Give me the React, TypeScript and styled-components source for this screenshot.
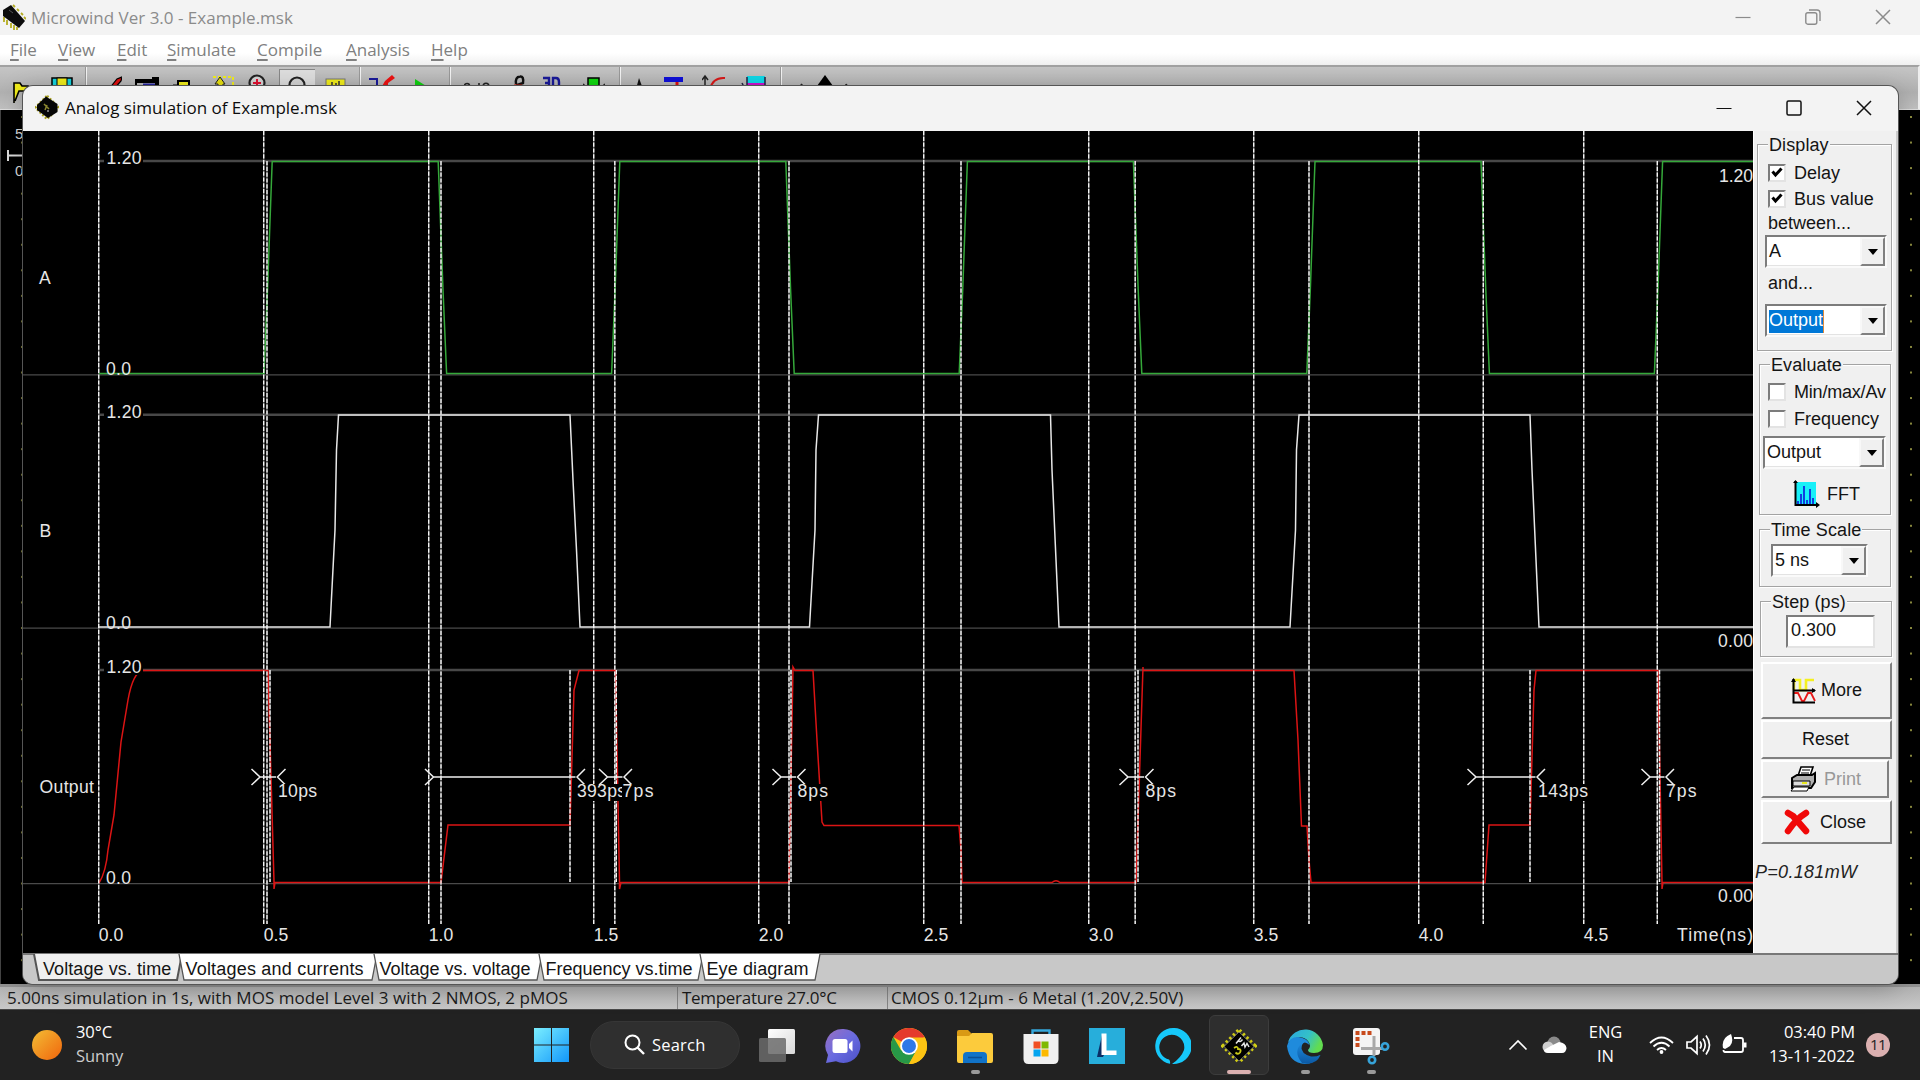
import React from "react";
import styled, { createGlobalStyle, css } from "styled-components";

const ARIAL = '"Liberation Sans", Arial, sans-serif';
const SEGOE = '"Open Sans", "Noto Sans", sans-serif';

const GlobalStyle = createGlobalStyle`
  * { box-sizing: border-box; }
  body { margin: 0; background: #000; overflow: hidden; }
`;

const Desktop = styled.div`
  position: relative;
  width: 1920px;
  height: 1080px;
  display: flex;
  flex-direction: column;
  background: #000;
  overflow: hidden;
`;

/* ---------- main window ---------- */

const MainTitle = styled.header`
  display: flex;
  align-items: center;
  height: 35px;
  padding-bottom: 1px;
  background: #f3f3f3;
  color: #8b8b8b;
  font: 17px ${SEGOE};
`;

const Title = styled.span<{ $gap: number; $spacing: number }>`
  margin-left: ${(p) => p.$gap}px;
  letter-spacing: ${(p) => p.$spacing}px;
  white-space: nowrap;
  flex: 1;
`;

const Controls = styled.div<{ $right: number }>`
  display: flex;
  align-items: center;
  gap: 54px;
  margin-right: ${(p) => p.$right}px;
`;

const MenuBar = styled.nav`
  display: flex;
  height: 30px;
  background: linear-gradient(#fff 60%, #f0f0f0);
  padding-left: 10px;
  color: #808080;
  font: 17px/30px ${SEGOE};
`;

const MenuItem = styled.span<{ $w: number; $spacing: number }>`
  width: ${(p) => p.$w}px;
  letter-spacing: ${(p) => p.$spacing}px;
  white-space: nowrap;
  &::first-letter { text-decoration: underline; text-underline-offset: 3px; text-decoration-thickness: 1.5px; }
`;

const Toolbar = styled.div`
  display: flex;
  height: 45px;
  border-top: 2px solid #a2a2a2;
  border-right: 2px solid #eee;
  border-bottom: 1px solid #ddd;
  background: linear-gradient(#c5c5c5, #b0b0b0 60%, #c0c0c0);
  overflow: hidden;
`;

const ToolSlot = styled.span<{ $ml: number; $w: number; $pressed?: boolean }>`
  flex: none;
  display: block;
  margin-left: ${(p) => p.$ml}px;
  margin-top: 2px;
  width: ${(p) => p.$w}px;
  height: 40px;
  ${(p) => p.$pressed && css`
    background: #dedede;
    border-left: 1px solid #888;
    border-top: 1px solid #888;
  `}
  svg { display: block; }
`;

const ToolSep = styled.i<{ $ml: number }>`
  flex: none;
  width: 2px;
  height: 42px;
  margin-left: ${(p) => p.$ml}px;
  border-left: 1px solid #999;
  border-right: 1px solid #f4f4f4;
`;

const Canvas = styled.main`
  height: 874px;
  display: flex;
  justify-content: space-between;
  border-left: 1px solid #444;
`;

const StatusBar = styled.footer`
  display: flex;
  height: 25px;
  border-top: 3px solid #919191;
  background: linear-gradient(#b2b2b2, #c8c8c8);
  color: #1b1b1b;
  font: 17px/21px ${SEGOE};
`;

const StatusPane = styled.div<{ $w?: number; $spacing: number; $pl: number }>`
  width: ${(p) => (p.$w ? p.$w + "px" : "auto")};
  padding-left: ${(p) => p.$pl}px;
  letter-spacing: ${(p) => p.$spacing}px;
  white-space: nowrap;
  & + & { border-left: 1px solid #858585; }
`;

/* ---------- simulation dialog ---------- */

const Dialog = styled.section`
  position: absolute;
  left: 23px;
  top: 86px;
  width: 1875px;
  height: 898px;
  display: flex;
  flex-direction: column;
  border-radius: 10px;
  overflow: hidden;
  background: #c8c8c8;
  box-shadow: 0 0 0 1px #555, 0 4px 24px rgba(0, 0, 0, 0.25);
`;

const DialogTitle = styled.header`
  flex: none;
  display: flex;
  align-items: center;
  height: 45px;
  padding: 0 0 2px 12px;
  background: #f3f3f3;
  color: #0c0c0c;
  font: 17px ${SEGOE};
`;

const DialogBody = styled.div`
  display: flex;
  height: 822px;
`;

const Plot = styled.svg`
  display: block;
  flex: none;
  width: 1730px;
  height: 822px;
  background: #000;
  text { font: 17.6px ${ARIAL}; fill: #e6e6e6; }
`;

const Panel = styled.aside`
  flex: 1;
  display: flex;
  flex-direction: column;
  align-items: flex-start;
  background: #f0f0f0;
  border-right: 2px solid #ccc;
  border-left: 1px solid #fff;
  color: #141414;
  font: 18px/20px ${ARIAL};
  overflow: hidden;
`;

const Group = styled.div<{ $ml: number; $mt: number; $w: number; $h: number }>`
  flex: none;
  display: flex;
  flex-direction: column;
  align-items: flex-start;
  margin: ${(p) => p.$mt}px 0 0 ${(p) => p.$ml}px;
  width: ${(p) => p.$w}px;
  height: ${(p) => p.$h}px;
  border: 1px solid #a3a3a3;
  box-shadow: 1px 1px 0 #fff, inset 1px 1px 0 #fff;
`;

const Legend = styled.span`
  height: 20px;
  margin: -10px 0 0 10px;
  padding: 0 1px;
  line-height: 21px;
  letter-spacing: 0.1px;
  background: #f0f0f0;
`;

const Row = styled.div<{ $mt: number; $ml: number; $h?: number; $spacing?: number }>`
  flex: none;
  display: flex;
  align-items: center;
  margin: ${(p) => p.$mt}px 0 0 ${(p) => p.$ml}px;
  height: ${(p) => p.$h ?? 18}px;
  letter-spacing: ${(p) => p.$spacing ?? 0}px;
  white-space: nowrap;
  background: #f0f0f0;
`;

const CheckBox = styled.span`
  display: flex;
  width: 18px;
  height: 18px;
  margin-right: 8px;
  background: #fff;
  border: 2px solid;
  border-color: #7c7c7c #e3e3e3 #e3e3e3 #7c7c7c;
`;

const Combo = styled.div<{ $mt: number; $ml: number; $w: number }>`
  flex: none;
  display: flex;
  margin: ${(p) => p.$mt}px 0 0 ${(p) => p.$ml}px;
  width: ${(p) => p.$w}px;
  height: 33px;
  background: #fff;
  border: 2px solid;
  border-color: #7c7c7c #fafafa #fafafa #7c7c7c;
  box-shadow: inset -1px -1px 0 #e3e3e3;
`;

const ComboText = styled.span`
  flex: 1;
  padding: 4px 0 0 2px;
`;

const Selected = styled.mark`
  display: inline-block;
  height: 23px;
  line-height: 21px;
  margin-top: -2px;
  background: #0078d7;
  color: #fff;
  border-right: 1px solid #e08a3c;
`;

const DropButton = styled.span`
  display: flex;
  align-items: center;
  justify-content: center;
  width: 25px;
  height: 29px;
  background: #f0f0f0;
  border: 2px solid;
  border-color: #f8f8f8 #808080 #808080 #f8f8f8;
  &::after {
    content: "";
    border: 5.5px solid transparent;
    border-top: 6px solid #000;
    border-bottom: 0;
  }
`;

const Input = styled.div`
  width: 89px;
  height: 33px;
  margin: 3px 0 0 25px;
  padding: 3px 0 0 3px;
  background: #fff;
  border: 2px solid;
  border-color: #7c7c7c #e3e3e3 #e3e3e3 #7c7c7c;
`;

const Button = styled.button<{ $mt: number; $h: number; $w?: number; $gap?: number; $pl: number; $off?: boolean }>`
  flex: none;
  display: flex;
  align-items: center;
  gap: ${(p) => p.$gap ?? 6}px;
  margin: ${(p) => p.$mt}px 0 0 7px;
  padding: 0 0 0 ${(p) => p.$pl}px;
  width: ${(p) => p.$w ?? 131}px;
  height: ${(p) => p.$h}px;
  color: ${(p) => (p.$off ? "#989898" : "#141414")};
  font: 18px ${ARIAL};
  background: #f0f0f0;
  border: 2px solid;
  border-color: #fff #808080 #808080 #fff;
`;

const Power = styled.div`
  margin: 18px 0 0 1px;
  font-style: italic;
  letter-spacing: 0.3px;
  color: #222;
`;

const TabStrip = styled.div`
  display: flex;
  height: 31px;
  padding-left: 13px;
  background: #c8c8c8;
  border-top: 2px solid #777;
  font: 18px ${ARIAL};
  color: #141414;
`;

const TabBox = styled.div<{ $w: number; $spacing: number; $pl: number }>`
  position: relative;
  width: ${(p) => p.$w}px;
  height: 27px;
  padding-left: ${(p) => p.$pl}px;
  line-height: 28px;
  white-space: nowrap;
  letter-spacing: ${(p) => p.$spacing}px;
  svg { position: absolute; left: -3px; top: -1px; overflow: visible; }
  span { position: relative; }
`;

/* ---------- taskbar ---------- */

const Taskbar = styled.div`
  position: relative;
  flex: none;
  display: flex;
  align-items: center;
  height: 71px;
  padding-bottom: 1px;
  border-top: 1px solid #484848;
  background: #222;
  color: #fff;
  font: 16.5px/24px ${SEGOE};
`;

const Weather = styled.div`
  display: flex;
  align-items: center;
  width: 518px;
  padding-left: 32px;
  letter-spacing: -0.1px;
  div + div { margin-left: 14px; padding-bottom: 1px; }
  small { display: block; font-size: inherit; color: #ccc; }
`;

const Sun = styled.div`
  width: 30px;
  height: 30px;
  border-radius: 50%;
  background: linear-gradient(135deg, #f3bd35, #f0650c);
`;

const Start = styled.div`
  width: 72px;
  padding-left: 16px;
  svg { display: block; }
`;

const Search = styled.div`
  display: flex;
  align-items: center;
  width: 150px;
  height: 48px;
  padding-left: 33px;
  gap: 7px;
  border-radius: 24px;
  background: #2f2f2f;
  border: 1px solid #363636;
  letter-spacing: 0.2px;
`;

const Apps = styled.div`
  display: flex;
  margin-left: 4px;
`;

const AppSlot = styled.div<{ $active?: boolean }>`
  display: flex;
  flex-direction: column;
  align-items: center;
  width: 60px;
  height: 60px;
  margin: 0 3px;
  padding-top: 12px;
  border-radius: 6px;
  border: 1px solid ${(p) => (p.$active ? "#3c3c3c" : "transparent")};
  background: ${(p) => (p.$active ? "#2e2e2e" : "transparent")};
  svg { display: block; flex: none; }
`;

const Running = styled.i<{ $active?: boolean }>`
  width: ${(p) => (p.$active ? 24 : 9)}px;
  height: 5px;
  margin-top: 6px;
  border-radius: 3px;
  background: ${(p) => (p.$active ? "#dbb0b0" : "#9a9a9a")};
`;

const Tray = styled.div`
  display: flex;
  align-items: center;
  flex: 1;
  padding-left: 104px;
  svg { flex: none; }
`;

const Lang = styled.div`
  width: 85px;
  margin-left: -4px;
  padding-bottom: 1px;
  text-align: center;
  letter-spacing: -0.1px;
`;

const Clock = styled.div`
  width: 108px;
  padding-bottom: 1px;
  text-align: right;
  white-space: nowrap;
  letter-spacing: 0px;
`;

const Badge = styled.div`
  width: 24px;
  height: 24px;
  margin-left: 11px;
  border-radius: 50%;
  background: #dbb0b0;
  color: #222;
  text-align: center;
  font-size: 15px;
  line-height: 23px;
  letter-spacing: -0.5px;
`;

/* ---------- small drawings ---------- */

const WindowButtons = ({ color, restored }: { color: string; restored?: boolean }) => (
  <>
    <svg width="16" height="16" stroke={color} strokeWidth="1.2"><path d="M0.5 8.500H15.5" /></svg>
    {restored ? (
      <svg width="16" height="16" fill="none" stroke={color} strokeWidth="1.4">
        <rect x="0.8" y="3.8" width="11" height="11.4" rx="2" />
        <path d="M4 1H12Q15 1 15 4V12" />
      </svg>
    ) : (
      <svg width="16" height="16" fill="none" stroke={color} strokeWidth="1.5"><rect x="1" y="1" width="14" height="14" rx="1.5" /></svg>
    )}
    <svg width="16" height="16" stroke={color} strokeWidth="1.5"><path d="M1 1L15 15M15 1L1 15" /></svg>
  </>
);

const MainChip = () => (
  <svg width="25" height="26" style={{ marginLeft: 1 }}>
    <path d="M3 13v5M6 16v5M10 19v5M13 21v5M16 23v3M12 1l2 2M16 5l2 2M20 9l2 2M23 13l2 2" stroke="#b4ac20" strokeWidth="1.8" />
    <path d="M2 6L10 1L24 17L18 24L2 12Z" fill="#0c0c0c" />
    <path d="M8 6l4 3" stroke="#555" />
  </svg>
);

const TitleChip = () => (
  <svg width="24" height="25" viewBox="0 0 24 25">
    <path d="M12 1L23.500 12.500L12 24L0.500 12.500Z" fill="none" stroke="#a8a020" strokeWidth="2.600" strokeDasharray="2 1.700" />
    <path d="M11 1.500L22.500 9V17L13 23L2 15V10Z" fill="#060606" />
    <path d="M9 9L14 14M12 10L10 15" stroke="#8c8830" strokeWidth="1.500" />
    <path d="M12 16H14" stroke="#ddd" />
  </svg>
);

const AppChip = () => (
  <svg width="36" height="36" viewBox="0 0 36 36">
    <path d="M18 2.500L33.500 18L18 33.500L2.500 18Z" fill="none" stroke="#d0cc14" strokeWidth="4.500" strokeDasharray="2.400 2.600" />
    <path d="M18 4L33 18.500L18 33L3 18.500Z" fill="#000" stroke="#8a8a8a" strokeWidth="0.7" />
    <path d="M15 15.500L20 9.500M17.300 12.500Q19 15 21.500 11.500M20.500 18L23 15L24 19L26 15.500L28 19" fill="none" stroke="#e4e4e4" strokeWidth="1.500" />
    <path d="M13 20Q17 17.500 17 21Q21 21 19 24.500Q17 27 14.500 24.500" fill="none" stroke="#c8c818" strokeWidth="1.800" />
  </svg>
);

type Tool = { ml: number; w: number; art?: React.ReactNode; sep?: boolean; pressed?: boolean };
const magnifier = (sign: React.ReactNode) => (
  <>
    <circle cx="9" cy="14" r="7.5" fill="#d4d4d4" stroke="#222" strokeWidth="2.2" />
    <g stroke="#e01030" strokeWidth="2">{sign}</g>
  </>
);
const tools: Tool[] = [
  { ml: 13, w: 17, art: <path d="M1 34V14H7L9 17H15V22H6L2 32" fill="#f2ee1c" stroke="#000" strokeWidth="1.6" /> },
  { ml: 21, w: 22, art: <><rect x="1" y="9" width="20" height="16" fill="#16d5e0" stroke="#000" strokeWidth="1.5" /><rect x="6" y="9" width="10" height="12" fill="#f2ee1c" stroke="#000" /></> },
  { ml: 12, w: 2, sep: true },
  { ml: 22, w: 13, art: <path d="M0 20L8 10L13 8L12 12L5 20" fill="#e01010" stroke="#000" strokeWidth="1.2" /> },
  { ml: 13, w: 26, art: <><path d="M0 10H17V8H24V17H20V14H2V17H0Z" fill="#000" /><path d="M8 16H20" stroke="#2222a0" strokeWidth="3" /></> },
  { ml: 12, w: 20, art: <><path d="M5 12H16V20H5Z" fill="#f2ee1c" stroke="#000" strokeWidth="2" /><path d="M0 18H6" stroke="#f2ee1c" strokeWidth="4" /><path d="M0 16H6" stroke="#000" /></> },
  { ml: 18, w: 24, art: <><path d="M2 8H22V20" fill="none" stroke="#f2ee1c" strokeDasharray="3 2" strokeWidth="2" /><path d="M7 20V15H4L9 8L14 15H12V20Z" fill="#e8e010" stroke="#222" /></> },
  { ml: 13, w: 19, art: magnifier(<path d="M9 10V18M5 14H13" />) },
  { ml: 12, w: 36, pressed: true, art: <g transform="translate(8 1)">{magnifier(<path d="M5 16H13" />)}</g> },
  { ml: 10, w: 22, art: <><rect x="1" y="10" width="19" height="14" fill="#f2ee1c" stroke="#777" /><path d="M7 13v7M11 14v6M14 12v7" stroke="#333" strokeWidth="1.5" /></> },
  { ml: 12, w: 2, sep: true },
  { ml: 8, w: 27, art: <><path d="M0 10H8V20" fill="none" stroke="#1a1a99" strokeWidth="2" /><path d="M12 19L16 12L23 6L26 9L19 14V19Z" fill="#ee1212" /></> },
  { ml: 18, w: 17, art: <path d="M1 10L17 20H1Z" fill="#10d010" /> },
  { ml: 18, w: 2, sep: true },
  { ml: 13, w: 28, art: <g fill="none" stroke="#222" strokeWidth="1.6"><circle cx="3" cy="17" r="2.5" /><path d="M15 14V20" /><circle cx="22" cy="17" r="2.8" /></g> },
  { ml: 10, w: 24, art: <><path d="M14 15Q13 8 18 7.500Q22 7 21 14L14 16.500" fill="none" stroke="#111" strokeWidth="2.400" /><path d="M3 17.500H22" stroke="#d0b010" strokeWidth="2.500" /><path d="M12 16.500H20" stroke="#e02010" strokeWidth="2" /></> },
  { ml: 17, w: 19, art: <path d="M0 9H6V20M2 14H6M10 20V9H13Q16 9 16 13V20" fill="none" stroke="#1a1a99" strokeWidth="2.4" /> },
  { ml: 21, w: 22, art: <><path d="M5 9H16V20H5Z" fill="#10d810" stroke="#000" strokeWidth="1.5" /><path d="M0 15L4 20M22 15L18 20" stroke="#222" strokeWidth="2" /></> },
  { ml: 14, w: 2, sep: true },
  { ml: 14, w: 9, art: <path d="M4 9L8 20H1Z" fill="#111" /> },
  { ml: 20, w: 20, art: <><rect x="0" y="8" width="19" height="5" fill="#1010d8" /><path d="M13 13V20" stroke="#e01010" strokeWidth="3" /></> },
  { ml: 18, w: 24, art: <><path d="M3 20V8M0 11L3 7L6 11" fill="none" stroke="#222" strokeWidth="1.5" /><path d="M8 20Q11 8 23 9" fill="none" stroke="#d81818" strokeWidth="2" /></> },
  { ml: 15, w: 26, art: <><rect x="6" y="7" width="18" height="7" fill="#10d8e8" /><rect x="6" y="14" width="18" height="7" fill="#d010d0" /><path d="M6 8V20M24 8V20M1 14L4 20" stroke="#224" strokeWidth="1.5" /></> },
  { ml: 13, w: 2, sep: true },
  { ml: 15, w: 52, art: <><path d="M28 6L36 17H20Z" fill="#000" /><path d="M5 15L2 20M49 15L51 20" stroke="#222" strokeWidth="2" /></> },
];

/* ---------- plot data, in window coordinates ---------- */

const gridX = Array.from({ length: 10 }, (_, i) => 98.7 + 165 * i);
const edgeX = [267, 441, 614.8, 789, 961, 1135.2, 1309, 1483.3, 1657.3];
const shortX = [270, 570, 616.3, 791, 1138, 1530, 1659.5];

const clockPath = (() => {
  let d = "M99 373.5";
  for (let i = 0; i < 5; i++) {
    const r = 264 + 347.6 * i;
    d += `H${r}L${r + 3.5} 290L${r + 7.5} 180L${r + 8.2} 161.5`;
    if (i < 4) d += `H${r + 174.2}L${r + 176} 210L${r + 179} 290L${r + 182.6} 373.5`;
  }
  return d + "H1753";
})();

const bPath =
  "M99 627H330L335 530L336.500 450L338.5 415H570L573 480L576.500 550L580 627H809.5L815 530L816 450L818.500 415H1050.5L1052 470L1059 627H1290L1295.500 530L1296.500 450L1299 415H1530L1532 470L1539 627H1753";

const outPath =
  "M99 883Q106 872 108 850L114 815L121 742L128 700Q133 672 143 670.5H268L274 882V889L275 882.5H441L448 825H570L574 690L579 670.5H615.5L619.5 882V889L621 882.5H789L793 667L795 670.5H813L817 740L822 822L824 825.5H959L961 850L962 882.5H1052Q1056 879 1060 882.5H1136L1143 667V670.5H1294L1298 740L1301.5 826H1307L1309 860L1311 882.5H1485L1489 825H1530L1534 690L1536 670.5H1658L1662 882V889L1663 882.5H1753";

const markers: { l: number; r: number; tx: number; tw: number; label: string }[] = [
  { l: 260, r: 277.5, tx: 278, tw: 39, label: "10ps" },
  { l: 433.5, r: 577, tx: 577, tw: 49, label: "393ps" },
  { l: 607.5, r: 624, tx: 622.5, tw: 31, label: "7ps" },
  { l: 781, r: 797.5, tx: 797.5, tw: 30.5, label: "8ps" },
  { l: 1128, r: 1145.5, tx: 1145.5, tw: 30.5, label: "8ps" },
  { l: 1476, r: 1537, tx: 1538, tw: 50, label: "143ps" },
  { l: 1650, r: 1666, tx: 1666, tw: 30.5, label: "7ps" },
];

const WavePlot = () => (
  <Plot viewBox="23 131 1730 822">
    <path d="M99 161H1753M99 414.8H1753M99 670H1753" stroke="#484848" strokeWidth="2.4" />
    <path d="M23 374.8H1753M23 628.2H1753M23 883.7H1753" stroke="#4a4a4a" strokeWidth="1.3" />
    <g strokeWidth="1.4" stroke="#606060">
      {gridX.map((x) => <path key={x} d={`M${x} 131V924`} />)}
      {edgeX.map((x) => <path key={x} d={`M${x} 161V924`} />)}
      {shortX.map((x) => <path key={x} d={`M${x} 670V882`} />)}
    </g>
    <g fill="none" strokeWidth="1.5">
      <path d={clockPath} stroke="#35a83a" />
      <path d={bPath} stroke="#e8e8e8" />
      <path d={outPath} stroke="#dc1414" />
    </g>
    <g stroke="#f4f4f4" strokeWidth="1.4" strokeDasharray="4.2 1.6">
      {gridX.map((x) => <path key={x} d={`M${x} 131V924`} />)}
      {edgeX.map((x) => <path key={x} d={`M${x} 161V924`} />)}
      {shortX.map((x) => <path key={x} d={`M${x} 670V882`} />)}
    </g>
    {[161, 415, 670].map((y) => (
      <g key={y}>
        <rect x="104" y={y - 12} width="39" height="17" fill="#000" />
        <text x="106.5" y={y + 2.5} textLength="35">1.20</text>
      </g>
    ))}
    {[374, 628, 883].map((y) => <text key={y} x="106" y={y + 1} textLength="25">0.0</text>)}
    <text x="39" y="284">A</text>
    <text x="39.5" y="537">B</text>
    <text x="39.5" y="793" textLength="54.5">Output</text>
    {markers.map((m, i) => (
      <g key={i}>
        <path
          d={`M${m.l - 8.5} 769L${m.l} 777L${m.l - 8.5} 785M${m.l} 777H${m.r - 1.5}M${m.r + 8} 769L${m.r} 777L${m.r + 8} 785`}
          fill="none" stroke="#f0f0f0" strokeWidth="1.5"
        />
        <rect x={m.tx - 0.5} y="784" width={m.tw} height="17" fill="#000" />
        <text x={m.tx} y="797" textLength={m.tw}>{m.label}</text>
      </g>
    ))}
    {gridX.map((x, i) => <text key={x} x={x} y="941" textLength="24.5">{(i * 0.5).toFixed(1)}</text>)}
    <text x="1677" y="941" textLength="76">Time(ns)</text>
    <text x="1719" y="181.5" textLength="34">1.20</text>
    <text x="1718" y="647" textLength="35">0.00</text>
    <text x="1718" y="902" textLength="35">0.00</text>
  </Plot>
);

const tabs: [string, number, number, number][] = [
  ["Voltage vs. time", 145, 0.08, 7],
  ["Voltages and currents", 195, 0.2, 4.5],
  ["Voltage vs. voltage", 165, 0, 3.5],
  ["Frequency vs.time", 161, 0, 4.5],
  ["Eye diagram", 117, 0.1, 4.5],
];

const Tab = ({ label, w, spacing, pl, active }: { label: string; w: number; spacing: number; pl: number; active: boolean }) => (
  <TabBox $w={w} $spacing={spacing} $pl={pl}>
    <svg width={w + 6} height="27">
      <path d={`M1 0L6 26H${w - 1}L${w + 4} 0Z`} fill={active ? "#f0f0f0" : "#fff"} />
      <path d={`M1 0L6 26H${w - 1}L${w + 4} 0`} fill="none" stroke="#555" strokeWidth={active ? 2 : 1.3} />
    </svg>
    <span>{label}</span>
  </TabBox>
);

const Check = ({ on, label }: { on?: boolean; label: string }) => (
  <>
    <CheckBox>
      {on && <svg width="14" height="14"><path d="M2.5 5.5L5.5 9L11.5 2.5" fill="none" stroke="#000" strokeWidth="3" /></svg>}
    </CheckBox>
    {label}
  </>
);

const SidePanel = () => (
  <Panel>
    <Group $ml={3} $mt={13} $w={135} $h={207}>
      <Legend>Display</Legend>
      <Row $mt={9} $ml={10}><Check on label="Delay" /></Row>
      <Row $mt={8} $ml={10} $spacing={0.1}><Check on label="Bus value" /></Row>
      <Row $mt={5} $ml={10} $h={20}>between...</Row>
      <Combo $mt={2} $ml={7} $w={122}><ComboText>A</ComboText><DropButton /></Combo>
      <Row $mt={5} $ml={10} $h={20}>and...</Row>
      <Combo $mt={11} $ml={7} $w={122}><ComboText><Selected>Output</Selected></ComboText><DropButton /></Combo>
    </Group>
    <Group $ml={5} $mt={13} $w={132} $h={151}>
      <Legend>Evaluate</Legend>
      <Row $mt={8} $ml={8} $spacing={-0.2}><Check label="Min/max/Av" /></Row>
      <Row $mt={9} $ml={8}><Check label="Frequency" /></Row>
      <Combo $mt={8} $ml={3} $w={123}><ComboText>Output</ComboText><DropButton /></Combo>
      <Row $mt={11} $ml={33} $h={28}>
        <svg width="27" height="28" style={{ marginRight: 7 }}>
          <rect x="3" y="2" width="20" height="23" fill="#18f0f8" />
          <path d="M5 25v-4M8 25v-11M11 25v-19M14 25v-5M17 25v-16M20 25v-7" stroke="#1040e0" strokeWidth="2" />
          <path d="M2.5 1V25H25" fill="none" stroke="#000" strokeWidth="2" />
          <path d="M0 3L2.5 0L5 3ZM23 22L27 25L23 28Z" />
        </svg>
        FFT
      </Row>
    </Group>
    <Group $ml={5} $mt={14} $w={132} $h={58}>
      <Legend>Time Scale</Legend>
      <Combo $mt={4} $ml={11} $w={97}><ComboText>5 ns</ComboText><DropButton /></Combo>
    </Group>
    <Group $ml={6} $mt={14} $w={132} $h={56}>
      <Legend>Step (ps)</Legend>
      <Input>0.300</Input>
    </Group>
    <Button $mt={5} $h={57} $pl={28}>
      <svg width="26" height="26">
        <path d="M3 12V2H9V12H15V2H23" fill="none" stroke="#f4f020" strokeWidth="2.6" />
        <path d="M3 15H7L11 23H13L17 15H20L24 23" fill="none" stroke="#e81818" strokeWidth="1.8" />
        <path d="M2.5 1V24.5H24M2 12.5H24" fill="none" stroke="#000" strokeWidth="2" />
        <path d="M0 4L2.5 0L5 4ZM21 10L25 12.5L21 15Z" />
      </svg>
      <span style={{ marginLeft: -2 }}>More</span>
    </Button>
    <Button $mt={1} $h={39} $pl={39}>Reset</Button>
    <Button $mt={1} $h={38} $w={128} $pl={27} $gap={7} $off>
      <svg width="27" height="26">
        <path d="M8 10L11 1H23L20 10" fill="#fff" stroke="#000" strokeWidth="1.6" />
        <path d="M12 4H20M11 7H19" stroke="#000" strokeWidth="1.2" />
        <path d="M2 12L7 9H22L25 7V16L21 22H2Z" fill="#b0b0b0" stroke="#000" strokeWidth="2" />
        <path d="M3 15H20V20H3Z" fill="#ddd" stroke="#000" />
        <path d="M12 17H17" stroke="#e8e820" strokeWidth="2" />
        <path d="M1 25H17L19 21H4Z" fill="#fff" stroke="#000" />
      </svg>
      Print
    </Button>
    <Button $mt={2} $h={44} $pl={21} $gap={10}>
      <svg width="26" height="28"><path d="M4 5L9 8L22 23M22 5Q12 11 4 23" fill="none" stroke="#f00808" strokeWidth="6.5" strokeLinecap="round" strokeLinejoin="round" /></svg>
      <span>Close</span>
    </Button>
    <Power>P=0.181mW</Power>
  </Panel>
);

/* ---------- taskbar art ---------- */

const TaskView = () => (
  <svg width="36" height="36">
    <defs><linearGradient id="tv" x2="1" y2="1"><stop stopColor="#fff" /><stop offset="1" stopColor="#d8d8d8" /></linearGradient></defs>
    <rect x="9" y="1" width="27" height="25" rx="1.5" fill="url(#tv)" />
    <rect x="0" y="10" width="27" height="24" rx="1.5" fill="#6b6b6b" opacity="0.85" />
  </svg>
);
const Teams = () => (
  <svg width="36" height="36">
    <defs><linearGradient id="tm" x2="1" y2="1"><stop stopColor="#9a70c0" /><stop offset="0.5" stopColor="#6a6be0" /><stop offset="1" stopColor="#4a50c8" /></linearGradient></defs>
    <path d="M18 1a17 17 0 1 1-7 32.300L1 35L3 27A17 17 0 0 1 18 1Z" fill="url(#tm)" />
    <rect x="7.500" y="11" width="15" height="14" rx="2.500" fill="#fff" />
    <path d="M24 16L27.500 12.500V23.500L24 20Z" fill="#fff" />
  </svg>
);
const Chrome = () => (
  <svg width="36" height="36" viewBox="0 0 36 36">
    <circle cx="18" cy="18" r="18" fill="#fdc413" />
    <path d="M18 18L2.400 9A18 18 0 0 1 33.600 9Z" fill="#e53a2c" />
    <path d="M2.400 9A18 18 0 0 0 18 36L25.800 22.500L18 18L10.200 22.500Z" fill="#279847" />
    <path d="M18 9.500H33.900A18 18 0 0 1 18 36L25.500 22Z" fill="#fdc413" />
    <circle cx="18" cy="18" r="8.800" fill="#fff" />
    <circle cx="18" cy="18" r="7" fill="#2f78e8" />
  </svg>
);
const Explorer = () => (
  <svg width="36" height="36">
    <path d="M0 4Q0 2 2 2H11L15 6V12H0Z" fill="#d99a14" />
    <path d="M0 8H12L15 5H34Q36 5 36 7V33Q36 35 34 35H2Q0 35 0 33Z" fill="#fccb3c" />
    <path d="M6 35V28Q6 24 10 24H26Q30 24 30 28V35Z" fill="#1173c8" />
    <path d="M11 29.500H25" stroke="#0b4f94" strokeWidth="1.500" />
  </svg>
);
const Store = () => (
  <svg width="36" height="36">
    <path d="M9.500 8V2.500H26.500V8" fill="none" stroke="#36a8dc" strokeWidth="2.400" />
    <path d="M.5 6H35.500V31Q35.500 36 30.500 36H5.500Q.5 36 .5 31Z" fill="#f0f0f0" />
    <path d="M10.500 13.500h7v7h-7z" fill="#f05024" /><path d="M18.500 13.500h7v7h-7z" fill="#7fb900" />
    <path d="M10.500 21.500h7v7h-7z" fill="#03a4ef" /><path d="M18.500 21.500h7v7h-7z" fill="#fcb900" />
  </svg>
);
const LIcon = () => (
  <svg width="36" height="36">
    <rect width="36" height="36" fill="#27aedb" />
    <path d="M13 7L8 29H14L16 25Z" fill="#0b2f66" />
    <path d="M12.500 5.500H17.500V22.500H27.500V27H12.500Z" fill="#fff" />
  </svg>
);
const Alexa = () => (
  <svg width="36" height="36">
    <path d="M18 0A18 18 0 0 0 15 35.700Q15.500 33 14 31.500A12.500 12.500 0 1 1 29 22Q26 30 17 35.900A18 18 0 1 0 18 0Z" fill="#16c8fa" />
  </svg>
);
const Edge = () => (
  <svg width="36" height="36" viewBox="0 0 36 36">
    <defs>
      <linearGradient id="e1" x2="1" y2=".4"><stop stopColor="#2aa6e0" /><stop offset=".6" stopColor="#34c1c8" /><stop offset="1" stopColor="#62dc50" /></linearGradient>
      <linearGradient id="e2" x2="0" y2="1"><stop stopColor="#1b86d8" /><stop offset="1" stopColor="#0c59a4" /></linearGradient>
    </defs>
    <path d="M1 14A18 18 0 0 1 36 17Q36 25 27 25Q21 25 21 22Q25 18 21 13Q14 5 1 14Z" fill="url(#e1)" />
    <path d="M0 18Q2 9 11 9Q21 10 22.500 17Q17 12 15 17Q12 25 20 29Q27 32 33 27Q27 36 18 36Q2 35 0 18Z" fill="#1f8bdc" />
    <path d="M14 16Q6 24 15 35Q29 38 33.500 27Q29 29 24 28.500Q13 26 14 16Z" fill="url(#e2)" />
  </svg>
);
const Snip = () => (
  <svg width="36" height="36" overflow="visible">
    <rect width="27" height="27" rx="3" fill="#f4f4f4" />
    <path d="M4.500 19V5H20" fill="none" stroke="#c84a1c" strokeWidth="4" strokeDasharray="4 2" />
    <path d="M21 8V28M8 20.500H29" stroke="#a8a8a8" strokeWidth="3" />
    <g fill="none" stroke="#36a3d9" strokeWidth="2.600"><circle cx="32" cy="18.500" r="3.200" /><circle cx="19" cy="32" r="3.200" /></g>
  </svg>
);

const apps: { art: React.ReactNode; run?: boolean; active?: boolean }[] = [
  { art: <TaskView /> }, { art: <Teams /> }, { art: <Chrome /> }, { art: <Explorer />, run: true },
  { art: <Store /> }, { art: <LIcon /> }, { art: <Alexa /> },
  { art: <AppChip />, run: true, active: true }, { art: <Edge />, run: true }, { art: <Snip />, run: true },
];

const RulerLeft = () => (
  <svg width="22" height="874" fontFamily="Liberation Sans" fontSize="15" fill="#ddd">
    <text x="14" y="29">5</text>
    <text x="14" y="66">0</text>
    <path d="M7 40V51M7 45.500H22" stroke="#ddd" strokeWidth="2" />
    {Array.from({ length: 34 }, (_, i) => <rect key={i} x="20" y={6 + i * 25.550} width="2" height="2" fill="#77773a" />)}
  </svg>
);

const DotsRight = () => (
  <svg width="14" height="874">
    {Array.from({ length: 34 }, (_, i) => <rect key={i} x="4" y={6 + i * 25.550} width="2" height="2" fill="#8c8c40" />)}
  </svg>
);

const menu: [string, number][] = [["File", 48], ["View", 59], ["Edit", 50], ["Simulate", 90], ["Compile", 89], ["Analysis", 85], ["Help", 60]];

export default function App() {
  return (
    <Desktop>
      <GlobalStyle />
      <MainTitle>
        <MainChip />
        <Title $gap={5} $spacing={0}>Microwind Ver 3.0 - Example.msk</Title>
        <Controls $right={29}><WindowButtons color="#8b8b8b" restored /></Controls>
      </MainTitle>
      <MenuBar>
        {menu.map(([t, w]) => <MenuItem key={t} $w={w} $spacing={0}>{t}</MenuItem>)}
      </MenuBar>
      <Toolbar>
        {tools.map((t, i) =>
          t.sep ? <ToolSep key={i} $ml={t.ml} /> : (
            <ToolSlot key={i} $ml={t.ml} $w={t.w} $pressed={t.pressed}><svg width={t.w} height="38">{t.art}</svg></ToolSlot>
          )
        )}
      </Toolbar>
      <Canvas><RulerLeft /><DotsRight /></Canvas>
      <StatusBar>
        <StatusPane $w={677} $pl={7} $spacing={0.03}>5.00ns simulation in 1s, with MOS model Level 3 with 2 NMOS, 2 pMOS</StatusPane>
        <StatusPane $w={210} $pl={4} $spacing={-0.3}>Temperature 27.0°C</StatusPane>
        <StatusPane $pl={3} $spacing={0}>CMOS 0.12µm - 6 Metal (1.20V,2.50V)</StatusPane>
      </StatusBar>
      <Taskbar>
        <Weather>
          <Sun />
          <div>30°C<small>Sunny</small></div>
        </Weather>
        <Start>
          <svg width="36" height="36">
            <defs><linearGradient id="win" gradientUnits="userSpaceOnUse" x1="0" y1="0" x2="36" y2="36"><stop stopColor="#7cf0ff" /><stop offset="1" stopColor="#0f94fa" /></linearGradient></defs>
            <path d="M0 1h17v16.500H0zM18 1h17v16.500H18zM0 18.500h17V35H0zM18 18.500h17V35H18z" fill="url(#win)" />
          </svg>
        </Start>
        <Search>
          <svg width="21" height="21" fill="none" stroke="#fff" strokeWidth="2"><circle cx="8.500" cy="8.500" r="7" /><path d="M13.500 13.500L20 20" strokeWidth="2.400" /></svg>
          Search
        </Search>
        <Apps>
          {apps.map((a, i) => (
            <AppSlot key={i} $active={a.active}>{a.art}{a.run && <Running $active={a.active} />}</AppSlot>
          ))}
        </Apps>
        <Tray>
          <svg width="20" height="12" fill="none" stroke="#fff" strokeWidth="1.600"><path d="M1.500 10.500L10 2L18.500 10.500" /></svg>
          <svg width="25" height="18" style={{ marginLeft: 14 }}>
            <circle cx="12" cy="7" r="6.500" fill="#8a8a8a" /><circle cx="6" cy="11" r="5.500" fill="#d0d0d0" />
            <path d="M2 14Q10 9 17 6Q24 7 24.500 12Q24 17 20 17H6Q2 17 2 14Z" fill="#fff" />
          </svg>
          <Lang>ENG<br />IN</Lang>
          <svg width="25" height="20" style={{ marginLeft: 1 }} fill="none" stroke="#fff" strokeWidth="1.800">
            <path d="M1 8Q12.500 -3 24 8M4.500 11.500Q12.500 4 20.500 11.500M8 15Q12.500 11 17 15" /><circle cx="12.500" cy="17" r="1.900" fill="#fff" stroke="none" />
          </svg>
          <svg width="25" height="22" style={{ marginLeft: 12 }} fill="none" stroke="#fff" strokeWidth="1.700">
            <path d="M1 8H5L11 2.500V19.500L5 14H1Z" /><path d="M14 7.500Q16.500 11 14 14.500M17 4.500Q21.500 11 17 17.500M20 1.500Q27 11 20 20.500" />
          </svg>
          <svg width="25" height="22" style={{ marginLeft: 11 }}>
            <path d="M12 4H19Q21 4 21 6V16Q21 18 19 18H3Q1.500 18 1.500 16" fill="none" stroke="#fff" strokeWidth="1.800" />
            <path d="M21.500 8.500H24.500V13.500H21.500Z" fill="#fff" />
            <path d="M9 0Q12 8 8 12Q5 14 3 15L1 14Q-1 4 9 0Z" fill="#fff" />
          </svg>
          <Clock>03:40 PM<br />13-11-2022</Clock>
          <Badge>11</Badge>
        </Tray>
      </Taskbar>
      <Dialog>
        <DialogTitle>
          <TitleChip />
          <Title $gap={6} $spacing={0}>Analog simulation of Example.msk</Title>
          <Controls $right={26}><WindowButtons color="#111" /></Controls>
        </DialogTitle>
        <DialogBody>
          <WavePlot />
          <SidePanel />
        </DialogBody>
        <TabStrip>
          {tabs.map(([t, w, s, pl], i) => <Tab key={t} label={t} w={w} spacing={s} pl={pl} active={i === 0} />)}
        </TabStrip>
      </Dialog>
    </Desktop>
  );
}
